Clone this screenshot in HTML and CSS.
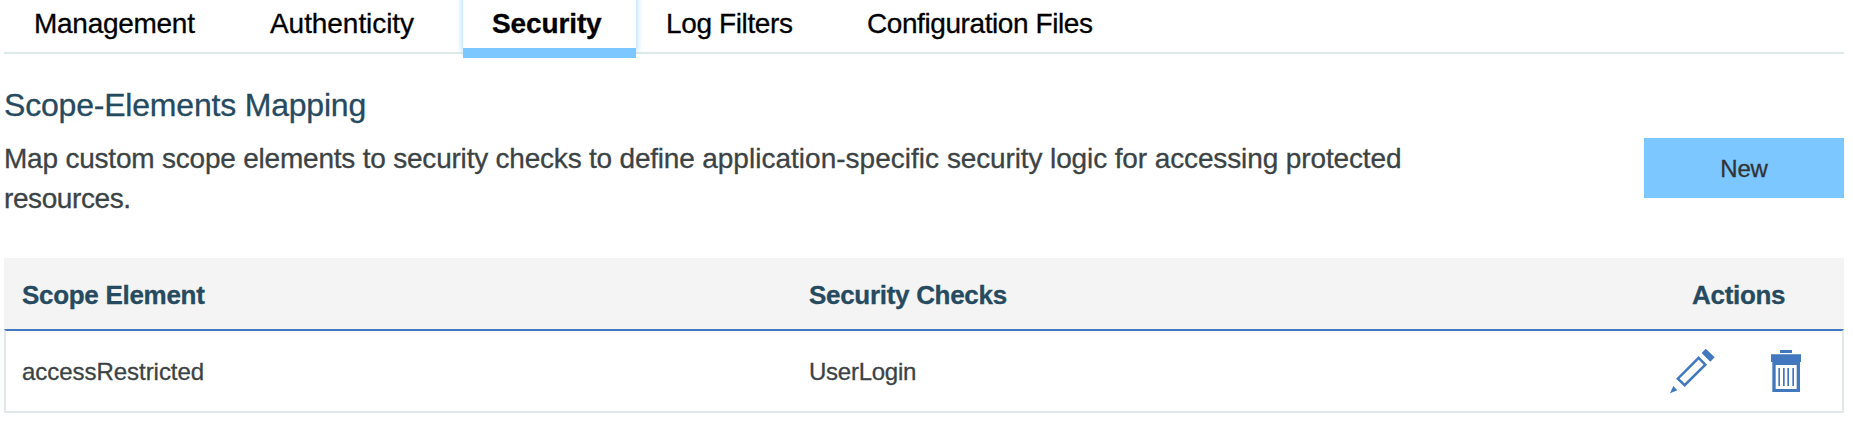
FILE: index.html
```html
<!DOCTYPE html>
<html lang="en">
<head>
<meta charset="utf-8">
<title>Security</title>
<link rel="stylesheet" href="styles.css">
</head>
<body>
<nav class="tabs">
  <a class="tab management">Management</a>
  <a class="tab authenticity">Authenticity</a>
  <a class="tab active">Security</a>
  <a class="tab logs">Log Filters</a>
  <a class="tab config">Configuration Files</a>
</nav>
<main>
  <section class="intro">
    <div class="copy">
      <h1>Scope-Elements Mapping</h1>
      <p><span class="tight">Map custom scope elements to security checks to define </span><span class="loose">application-specific </span>security logic for accessing protected<br><span class="last-word">resources.</span></p>
    </div>
    <button class="new">New</button>
  </section>
  <section class="table">
    <div class="row head">
      <div>Scope Element</div>
      <div>Security Checks</div>
      <div class="actions-title">Actions</div>
    </div>
    <div class="row item">
      <div class="cell">accessRestricted</div>
      <div class="cell login">UserLogin</div>
      <div class="actions">
        <svg class="pencil" viewBox="84 81 144 144"><path fill="#4178be" d="M197 86 224 112 211 125 185 99ZM100 198 112 211 90 220Z"/><path fill="none" stroke="#4178be" stroke-width="7.5" d="M176 113.500 196 134 134 195.500 113.500 176Z"/></svg>
        <svg class="trash" viewBox="387 84 102 138"><path fill="#4178be" d="M420 90H456V99H420ZM393 103H483V126H480V216H397V126H393ZM407 135V207H470V135Z"/><path fill="#4178be" d="M415 144h5v54h-5zM429 144h5v54h-5zM442 144h5v54h-5zM457 144h5v54h-5z"/></svg>
      </div>
    </div>
  </section>
</main>
</body>
</html>
```
FILE: styles.css
```css
* { box-sizing: border-box; }
body { margin: 0; padding: 0 9px 0 4px; background: #fff; color: #3b4345; font-family: "Liberation Sans", Arial, sans-serif; overflow: hidden; -webkit-text-stroke-width: .3px; }
.tabs { display: flex; height: 54px; border-bottom: 2px solid #dfe9e9; color: #000; font-size: 28px; line-height: 32px; white-space: nowrap; }
.tab { height: 54px; padding-top: 8px; flex: none; }
.management { width: 235px; padding-left: 30px; letter-spacing: -.28px; }
.authenticity { width: 224px; padding-left: 31px; letter-spacing: -.06px; }
.active { width: 173px; height: 58px; padding-left: 29px; border-bottom: 10px solid #7cc7ff; font-weight: 700; letter-spacing: -.12px; box-shadow: 0 -6px 7px rgba(124, 199, 255, .8); clip-path: inset(0 -8px 0 -8px); }
.logs { width: 199px; padding-left: 30px; letter-spacing: -.38px; }
.config { padding-left: 32px; letter-spacing: -.42px; }
.intro { display: flex; justify-content: space-between; height: 204px; }
h1 { margin: 33px 0 0; font-size: 32px; line-height: 36px; font-weight: 400; color: #264a60; letter-spacing: -.2px; }
p { margin: 16px 0 0; font-size: 28px; line-height: 40px; white-space: nowrap; letter-spacing: -.12px; }
.tight { letter-spacing: -.21px; }
.loose { letter-spacing: .02px; }
.last-word { letter-spacing: -.4px; }
.new { width: 200px; height: 60px; margin-top: 84px; padding: 2px 0 0; border: 0; background: #7cc7ff; color: #333; font: 24px "Liberation Sans", Arial, sans-serif; letter-spacing: -.2px; }
.row { display: grid; grid-template-columns: 787px 1fr 241px; align-items: center; }
.head { height: 71px; padding: 3px 0 0 18px; background: #f4f4f4; color: #264a60; font-size: 26px; font-weight: 700; letter-spacing: -.3px; }
.item { height: 84px; padding-left: 16px; border: 2px solid #dfe9e9; border-top-color: #4178be; font-size: 24px; }
.cell { padding-top: 2px; letter-spacing: -.04px; }
.login { letter-spacing: -.25px; }
.actions-title { padding-left: 89px; }
.actions { display: flex; align-items: center; padding-left: 67px; gap: 53px; }
.pencil { width: 48px; height: 48px; }
.trash { width: 34px; height: 46px; }
```
